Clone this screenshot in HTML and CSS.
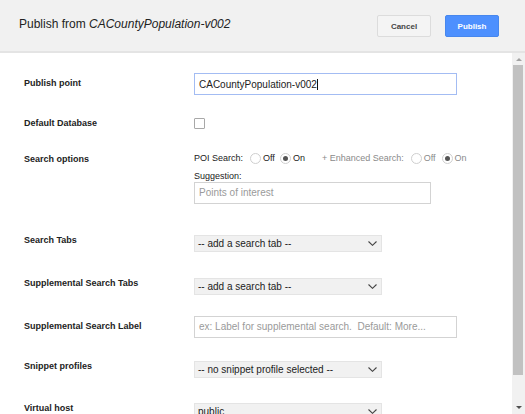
FILE: index.html
```html
<!DOCTYPE html>
<html lang="en">
<head>
<meta charset="utf-8">
<title>Publish</title>
<link rel="stylesheet" href="styles.css">
</head>
<body>
<div class="dialog">
  <header class="header">
    <h1 class="title">Publish from <em>CACountyPopulation-v002</em></h1>
    <div class="actions">
      <button class="btn btn-cancel" type="button">Cancel</button>
      <button class="btn btn-primary" type="button">Publish</button>
    </div>
  </header>
  <div class="body">
    <div class="content">
      <div class="form">
        <div class="label label-input">Publish point</div>
        <div class="field">
          <div class="textbox textbox-wide textbox-focused">CACountyPopulation-v002<span class="caret"></span></div>
        </div>

        <div class="label">Default Database</div>
        <div class="field">
          <span class="checkbox"></span>
        </div>

        <div class="label label-options">Search options</div>
        <div class="field options">
          <div class="radio-row">
            <span class="radio-title">POI Search:</span>
            <span class="radio"></span><span class="radio-text radio-text-tight">Off</span>
            <span class="radio radio-checked"></span><span class="radio-text">On</span>
            <span class="radio-title radio-muted enhanced">+ Enhanced Search:</span>
            <span class="radio"></span><span class="radio-text radio-muted">Off</span>
            <span class="radio radio-checked"></span><span class="radio-text radio-muted">On</span>
          </div>
          <div class="sub-label">Suggestion:</div>
          <div class="textbox textbox-medium placeholder">Points of interest</div>
        </div>

        <div class="label">Search Tabs</div>
        <div class="field">
          <div class="select"><span>-- add a search tab --</span><svg class="chevron" width="9" height="5" viewBox="0 0 9 5"><path d="M0.5 0.5 L4.5 4.3 L8.5 0.5" fill="none" stroke="#444" stroke-width="1.1"/></svg></div>
        </div>

        <div class="label">Supplemental Search Tabs</div>
        <div class="field">
          <div class="select"><span>-- add a search tab --</span><svg class="chevron" width="9" height="5" viewBox="0 0 9 5"><path d="M0.5 0.5 L4.5 4.3 L8.5 0.5" fill="none" stroke="#444" stroke-width="1.1"/></svg></div>
        </div>

        <div class="label label-input">Supplemental Search Label</div>
        <div class="field">
          <div class="textbox textbox-wide placeholder">ex: Label for supplemental search.&nbsp; Default: More...</div>
        </div>

        <div class="label">Snippet profiles</div>
        <div class="field">
          <div class="select"><span>-- no snippet profile selected --</span><svg class="chevron" width="9" height="5" viewBox="0 0 9 5"><path d="M0.5 0.5 L4.5 4.3 L8.5 0.5" fill="none" stroke="#444" stroke-width="1.1"/></svg></div>
        </div>

        <div class="label">Virtual host</div>
        <div class="field">
          <div class="select"><span>public</span><svg class="chevron" width="9" height="5" viewBox="0 0 9 5"><path d="M0.5 0.5 L4.5 4.3 L8.5 0.5" fill="none" stroke="#444" stroke-width="1.1"/></svg></div>
        </div>
      </div>
    </div>
    <div class="scrollbar">
      <div class="scroll-btn"><span class="arrow-up"></span></div>
      <div class="thumb"></div>
      <div class="scroll-space"></div>
      <div class="scroll-btn scroll-btn-down"><span class="arrow-down"></span></div>
    </div>
  </div>
</div>
</body>
</html>
```

FILE: styles.css
```css
html, body {
  margin: 0;
  padding: 0;
  width: 525px;
  height: 414px;
  overflow: hidden;
  background: #fff;
  font-family: "Liberation Sans", Arial, sans-serif;
  color: #222;
}

.dialog {
  display: flex;
  flex-direction: column;
  height: 414px;
}

.header {
  box-sizing: border-box;
  height: 53px;
  flex: none;
  background: #f1f1f1;
  border-bottom: 2px solid #e4e4e4;
  display: flex;
  justify-content: space-between;
  align-items: flex-start;
  padding: 15px 26px 0 19px;
}

.title {
  margin: 2px 0 0;
  font-size: 12px;
  line-height: 14px;
  font-weight: normal;
  color: #222;
}

.title em {
  font-style: italic;
}

.actions {
  display: flex;
  gap: 14px;
}

.btn {
  box-sizing: border-box;
  height: 22px;
  width: 54px;
  padding: 0;
  font-family: "Liberation Sans", Arial, sans-serif;
  font-size: 8px;
  font-weight: bold;
  border-radius: 2px;
  cursor: pointer;
}

.btn-cancel {
  background: #f4f4f4;
  border: 1px solid #dcdcdc;
  color: #444;
}

.btn-primary {
  background: #4d90fe;
  border: 1px solid #4787ed;
  color: #fff;
}

.body {
  flex: 1;
  display: flex;
  min-height: 0;
  overflow: hidden;
}

.content {
  flex: 1;
  overflow: hidden;
}

.form {
  display: grid;
  grid-template-columns: 170px 1fr;
  grid-template-rows: 45px 33px 84px 43px 38px 45px 42px 43px;
  padding: 20px 0 0 24px;
}

.label {
  font-size: 9px;
  line-height: 11px;
  font-weight: bold;
  color: #222;
}

.label-input {
  margin-top: 5px;
}

.label-options {
  margin-top: 3px;
}

.field {
  display: flex;
  flex-direction: column;
  align-items: flex-start;
}

.textbox {
  box-sizing: border-box;
  height: 22px;
  border: 1px solid #d3d3d3;
  padding: 0 4px;
  font-size: 10px;
  line-height: 20px;
  color: #222;
  white-space: nowrap;
  overflow: hidden;
  background: #fff;
}

.textbox-wide {
  width: 263px;
}

.textbox-medium {
  width: 237px;
}

.textbox-focused {
  border-color: #a3bcf3;
  padding-top: 1px;
}

.caret {
  display: inline-block;
  width: 1px;
  height: 11px;
  background: #111;
  vertical-align: -2px;
}

.placeholder {
  color: #9a9a9a;
}

.checkbox {
  box-sizing: border-box;
  width: 11px;
  height: 11px;
  border: 1px solid #a8a8a8;
  background: #fff;
  border-radius: 1px;
}

.radio-row {
  display: flex;
  align-items: center;
  height: 14px;
  font-size: 9px;
  line-height: 14px;
  color: #222;
}

.radio-title {
  margin-right: 7px;
}

.enhanced {
  margin-left: 11px;
  margin-right: 7px;
}

.radio-muted {
  color: #8a8a8a;
}

.radio {
  box-sizing: border-box;
  width: 11px;
  height: 11px;
  border: 1px solid #cfcfcf;
  border-radius: 50%;
  background: #fff;
  display: flex;
  align-items: center;
  justify-content: center;
  margin-right: 2px;
}

.radio-checked::after {
  content: "";
  width: 5px;
  height: 5px;
  border-radius: 50%;
  background: #555;
}

.radio-text {
  margin-right: 6px;
}

.radio-text-tight {
  margin-right: 5px;
}

.radio-text:last-child {
  margin-right: 0;
}

.sub-label {
  margin-top: 6px;
  font-size: 9px;
  line-height: 11px;
  color: #222;
}

.select {
  box-sizing: border-box;
  width: 188px;
  height: 17px;
  background: #f1f1f1;
  border: 1px solid #e4e4e4;
  display: flex;
  align-items: center;
  justify-content: space-between;
  padding: 0 4px 0 3px;
  font-size: 10px;
  line-height: 15px;
  color: #222;
  white-space: nowrap;
}

.chevron {
  flex: none;
}

.scrollbar {
  width: 13px;
  flex: none;
  background: #f1f1f1;
  display: flex;
  flex-direction: column;
  align-items: center;
}

.scroll-btn {
  height: 12px;
  width: 100%;
  display: flex;
  align-items: center;
  justify-content: center;
  flex: none;
}

.scroll-btn-down {
  height: 13px;
}

.arrow-up {
  width: 0;
  height: 0;
  border-left: 3px solid transparent;
  border-right: 3px solid transparent;
  border-bottom: 3px solid #a3a3a3;
}

.arrow-down {
  width: 0;
  height: 0;
  border-left: 3px solid transparent;
  border-right: 3px solid transparent;
  border-top: 3px solid #505050;
}

.thumb {
  width: 10px;
  height: 310px;
  background: #c1c1c1;
  flex: none;
  margin-left: -1px;
}

.scroll-space {
  flex: 1;
}
```
